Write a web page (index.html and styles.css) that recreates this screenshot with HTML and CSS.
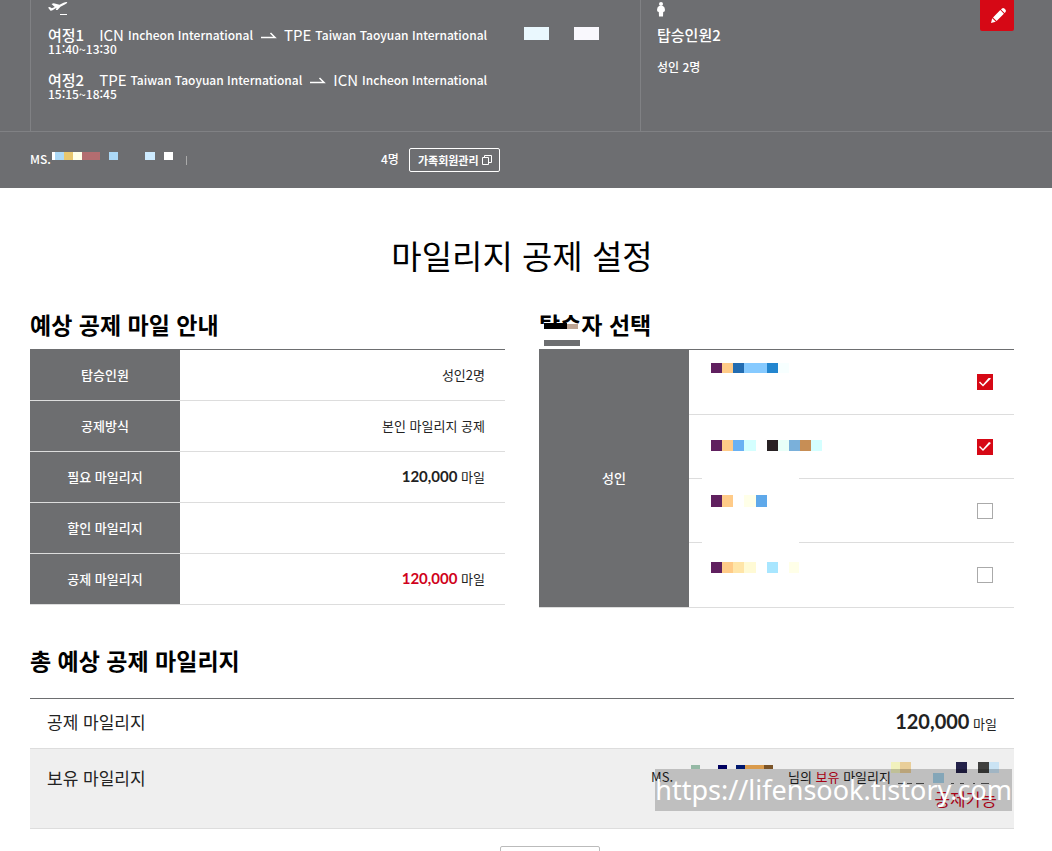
FILE: index.html
```html
<!DOCTYPE html>
<html lang="ko">
<head>
<meta charset="utf-8">
<title>마일리지 공제 설정</title>
<link rel="stylesheet" href="styles.css">
</head>
<body>
<header class="trip">
  <div class="trip-grid">
    <section class="journeys">
      <svg class="trip-icon" width="24" height="16" viewBox="0 0 24 16"><path d="M0 7.500l1.800-.4 2 1.200 3-1.200L3.500 4l2.200-.8 5.800 1.500 4-1.900q3-1.200 3.800-.5.200 1-2.500 2.300L12.500 6.700 9.500 10H7.800l.8-2.200-4.100 2.400q-1.500.8-2.200.2z" fill="#fff"/><path d="M12 14.500h7" stroke="#fff"/></svg>
      <ul class="journey-list">
        <li>
          <div class="route"><strong class="leg">여정1</strong><span class="code">ICN</span><span class="airport">Incheon International</span><svg class="arrow" width="15" height="8" viewBox="0 0 15 8"><path d="M0 6.500h14L9.500 2" fill="none" stroke="#fff" stroke-width="1.500"/></svg><span class="code">TPE</span><span class="airport">Taiwan Taoyuan International</span><svg class="flight" width="75" height="13" viewBox="0 0 75 13"><path fill="#eaf8fe" d="M0 0h25v13H0z"/><path fill="#f9f8fd" d="M50 0h25v13H50z"/></svg></div>
          <div class="time">11:40~13:30</div>
        </li>
        <li>
          <div class="route"><strong class="leg">여정2</strong><span class="code">TPE</span><span class="airport">Taiwan Taoyuan International</span><svg class="arrow" width="15" height="8" viewBox="0 0 15 8"><path d="M0 6.500h14L9.500 2" fill="none" stroke="#fff" stroke-width="1.500"/></svg><span class="code">ICN</span><span class="airport">Incheon International</span></div>
          <div class="time">15:15~18:45</div>
        </li>
      </ul>
    </section>
    <section class="party">
      <div>
        <svg class="trip-icon" width="8" height="18" viewBox="0 0 8 18"><circle cx="4" cy="4" r="2" fill="#fff"/><path d="M2 6h4q2 1 2 4 0 2-1.800 2L6 16.500H2L1.800 12Q0 12 0 10q0-3 2-4z" fill="#fff"/></svg>
        <h2 class="party-title">탑승인원2</h2>
        <p class="party-count">성인 2명</p>
      </div>
      <button class="edit" type="button"><svg width="16" height="16" viewBox="0 0 16 16"><path d="M0 16l1.200-4.800 3.600 3.600z" fill="#fff"/><path d="M2 10.400l7.300-7.300 3.600 3.600L5.600 14zM10 2.400l1-1q1.200-1 2.400.2l1 1q1 1.200.2 2.400l-1 1z" fill="#fff"/></svg></button>
    </section>
  </div>
  <div class="member">
    <span class="salutation">MS.</span>
    <svg class="member-name" width="122" height="8" viewBox="0 0 122 8"><path fill="#fff" d="M0 0h3v8H0zM112 0h9v8h-9z"/><path fill="#acd9f7" d="M3 0h9v8H3zM57 0h9v8h-9z"/><path fill="#e8c76e" d="M12 0h9v8h-9z"/><path fill="#ffffe8" d="M21 0h9v8h-9z"/><path fill="#b36d70" d="M30 0h18v8H30z"/><path fill="#cdebff" d="M93 0h10v8H93z"/></svg>
    <span class="bar"></span>
    <span class="family-count">4명</span>
    <button class="family" type="button">가족회원관리<svg width="10" height="10" viewBox="0 0 10 10"><path d="M.5 2.500h6v7h-6zM2.500 2.500v-2h7v7h-3" fill="none" stroke="#fff"/></svg></button>
  </div>
</header>

<main class="content">
  <h1 class="page-title">마일리지 공제 설정</h1>
  <div class="columns">
    <section>
      <h2 class="heading">예상 공제 마일 안내</h2>
      <table class="grid summary">
        <tr><th scope="row">탑승인원</th><td>성인2명</td></tr>
        <tr><th scope="row">공제방식</th><td>본인 마일리지 공제</td></tr>
        <tr><th scope="row">필요 마일리지</th><td><b class="num">120,000</b> 마일</td></tr>
        <tr><th scope="row">할인 마일리지</th><td></td></tr>
        <tr><th scope="row">공제 마일리지</th><td><b class="num red">120,000</b> 마일</td></tr>
      </table>
    </section>
    <section>
      <h2 class="heading">탑승자 선택<svg class="heading-mask" width="42" height="42" viewBox="0 0 42 42"><path fill="#fff" d="M0 20h42v16H0z"/><path d="M5 19h23v6H5z"/><path fill="#bda493" d="M28 20h11v5H28z"/><path fill="#6d6e70" d="M5 36h36v6H5z"/></svg></h2>
      <table class="grid people">
        <tr>
          <th scope="row" rowspan="4" id="adult">성인</th>
          <td><div class="person"><svg width="130" height="64" viewBox="0 0 130 64"><path fill="#60205f" d="M9 13h11v10H9z"/><path fill="#ffcb88" d="M20 13h11v10H20z"/><path fill="#226cb1" d="M31 13h11v10H31z"/><path fill="#86caff" d="M42 13h23v10H42z"/><path fill="#2386cf" d="M65 13h11v10H65z"/><path fill="#f7ffff" d="M76 13h11v10H76z"/></svg><input class="check" type="checkbox" aria-labelledby="adult" checked></div></td>
        </tr>
        <tr>
          <td><div class="person"><svg width="130" height="63" viewBox="0 0 130 63"><path fill="#60205f" d="M9 25h11v11H9z"/><path fill="#ffcb88" d="M20 25h11v11H20z"/><path fill="#69b1f3" d="M31 25h11v11H31z"/><path fill="#d4ffff" d="M42 25h12v11H42zM109 25h11v11h-11z"/><path fill="#282123" d="M65 25h11v11H65z"/><path fill="#e8fff8" d="M76 25h11v11H76z"/><path fill="#7ab0da" d="M87 25h11v11H87z"/><path fill="#c78e55" d="M98 25h11v11H98z"/></svg><input class="check" type="checkbox" aria-labelledby="adult" checked></div></td>
        </tr>
        <tr>
          <td><div class="person"><svg width="130" height="63" viewBox="0 0 130 63"><path fill="#fff" d="M0-1h97v65H0z"/><path fill="#60205f" d="M9 16h11v12H9z"/><path fill="#ffcb88" d="M20 16h11v12H20z"/><path fill="#ffffe8" d="M42 16h12v12H42z"/><path fill="#5fa9ea" d="M54 16h11v12H54z"/></svg><input class="check" type="checkbox" aria-labelledby="adult"></div></td>
        </tr>
        <tr>
          <td><div class="person"><svg width="130" height="64" viewBox="0 0 130 64"><path fill="#60205f" d="M9 19h11v11H9z"/><path fill="#ffcb88" d="M20 19h11v11H20z"/><path fill="#ffe5a8" d="M31 19h11v11H31z"/><path fill="#fffad5" d="M42 19h12v11H42z"/><path fill="#a8e6ff" d="M65 19h11v11H65z"/><path fill="#ffffe8" d="M87 19h10v11H87z"/></svg><input class="check" type="checkbox" aria-labelledby="adult"></div></td>
        </tr>
      </table>
    </section>
  </div>

  <section class="total">
    <h2 class="heading">총 예상 공제 마일리지</h2>
    <dl class="total-list">
      <div class="total-row">
        <dt>공제 마일리지</dt>
        <dd><b class="num big">120,000</b> 마일</dd>
      </div>
      <div class="total-row owned">
        <dt>보유 마일리지</dt>
        <dd>
          <div class="owner">MS.<svg width="115" height="24" viewBox="0 0 115 24"><path fill="#95b9a5" d="M18 0h9v4h-9z"/><path fill="#00005f" d="M45 0h9v4h-9z"/><path fill="#00186f" d="M63 0h9v4h-9z"/><path fill="#da9b4c" d="M72 0h19v4H72z"/><path fill="#7b5428" d="M91 0h9v4h-9z"/></svg>님의 <span class="red">보유</span> 마일리지<svg width="106" height="24" viewBox="0 0 106 24"><path fill="#f1f1bd" d="M0-3h9V8H0z"/><path fill="#e9ce99" d="M9-3h11V8H9z"/><path fill="#a6d0e7" d="M42 8h11v10H42z"/><path fill="#232149" d="M65-3h11V8H65z"/><path fill="#40403f" d="M87-3h11V8H87z"/><path fill="#cae3f4" d="M98-3h10V8H98z"/><path d="M7 18.500h6m3 0h5m4 0h8m27 0h3m6 0h4m9 0h2m6 0h8" stroke="#555" fill="none"/></svg></div>
          <div class="red possible">공제가능</div>
        </dd>
      </div>
    </dl>
    <div class="watermark">https://lifensook.tistory.com</div>
  </section>
  <div class="actions"><button class="next" type="button"></button></div>
</main>
</body>
</html>
```

FILE: styles.css
```css
* { box-sizing: border-box; }

body {
  margin: 0;
  height: 100vh;
  overflow: hidden;
  background: #fff;
  color: #222;
  font-family: "Noto Sans CJK KR", sans-serif;
  font-size: 13px;
}

h1, h2, p, ul, dl, dd { margin: 0; padding: 0; }
ul { list-style: none; }
svg { display: block; flex: none; overflow: visible; }
button { font-family: inherit; cursor: pointer; }

/* Trip header */
.trip { background: #6d6e71; color: #fff; }
.trip-grid {
  display: grid;
  grid-template-columns: 610fr 412fr;
  padding-left: 30px;
  border-bottom: 1px solid #808184;
}
.journeys, .party { border-left: 1px solid #808184; }
.journeys { padding: 0 17px 31px; }
.trip-icon { margin-bottom: 11px; }
.journey-list { display: grid; gap: 17px; }
.route { display: flex; align-items: center; height: 16px; line-height: 16px; white-space: nowrap; }
.leg { margin-right: 15px; font-size: 15px; font-weight: 500; }
.code { margin-right: 4px; font-size: 15px; }
.airport { font-size: 12px; font-weight: 500; }
.arrow { margin: 0 8px; }
.flight { margin: 0 0 4px 37px; }
.time { font-size: 12px; font-weight: 500; line-height: 12px; }

.party { display: flex; justify-content: space-between; padding: 0 38px 0 16px; }
.party .trip-icon { margin-bottom: 7px; }
.party-title { font-size: 15px; font-weight: 500; line-height: 20px; }
.party-count { margin-top: 12px; font-size: 12px; font-weight: 500; line-height: 20px; }
.edit {
  display: flex;
  align-items: flex-end;
  justify-content: center;
  width: 34px;
  height: 31px;
  padding: 0 0 8px 3px;
  border: 0;
  border-radius: 0 0 2px 2px;
  background: #d60815;
}

.member {
  display: flex;
  align-items: center;
  height: 56px;
  padding: 0 38px 0 30px;
  font-size: 12px;
  font-weight: 500;
  line-height: 16px;
}
.salutation { width: 22px; padding-bottom: 2px; }
.member-name { margin: 0 12px 8px 0; }
.bar { width: 1px; height: 9px; background: #aaa; }
.family-count { margin-left: 194px; padding-bottom: 2px; }
.family {
  display: flex;
  align-items: center;
  gap: 3px;
  height: 24px;
  margin-left: 10px;
  padding: 0 7px 0 8px;
  border: 1px solid #fff;
  border-radius: 2px;
  background: transparent;
  color: #fff;
  font-size: 11px;
  font-weight: 700;
}

/* Content */
.content { padding: 42px 38px 0 30px; }
.page-title {
  margin-bottom: 24px;
  color: #000;
  font-size: 33px;
  font-weight: 400;
  line-height: 50px;
  text-align: center;
}
.columns { display: grid; grid-template-columns: 1fr 1fr; gap: 34px; }
.heading {
  position: relative;
  margin-bottom: 5px;
  color: #000;
  font-size: 23px;
  font-weight: 700;
  line-height: 40px;
}
.heading-mask { position: absolute; left: 0; top: 0; }

.grid {
  width: 100%;
  border-spacing: 0;
  border-top: 1px solid #6d6e70;
}
.grid th {
  width: 150px;
  padding: 0 0 2px;
  border-bottom: 1px solid #ddd;
  background: #6d6e70;
  color: #fff;
  font-weight: 500;
}
.grid td { padding: 0 20px 2px; border-bottom: 1px solid #ddd; }
.summary th, .summary td { height: 51px; }
.summary td { text-align: right; }
.people td { padding: 0 21px 0 13px; }
.person { display: flex; align-items: center; justify-content: space-between; }

.check {
  display: grid;
  place-items: center;
  width: 16px;
  height: 16px;
  margin: 0;
  appearance: none;
  border: 1px solid #aaa;
  background: #fff;
}
.check:checked { border-color: #d60815; background: #d60815; }
.check:checked::before {
  content: "";
  width: 12px;
  height: 9px;
  background: #fff;
  clip-path: polygon(0 5px, 1px 4px, 4px 7px, 10px 0, 12px 1px, 4px 9px);
}

.num { font-family: Lato, sans-serif; font-size: 15px; font-weight: 700; }
.big { font-size: 20px; }
.red { color: #d0021b; }

/* Totals */
.total { position: relative; margin-top: 32px; }
.total .heading { margin-bottom: 18px; }
.total-list { border-top: 1px solid #6d6e70; }
.total-row {
  display: flex;
  justify-content: space-between;
  padding: 10px 17px;
  border-bottom: 1px solid #ddd;
  line-height: 24px;
}
.total-row dt { padding: 1px 0 4px; font-size: 17px; font-weight: 400; }
.owned { padding: 16px 17px 19px; background: #efefef; }
.owned dd { text-align: right; }
.owner { display: flex; justify-content: flex-end; white-space: pre; }
.possible { font-size: 17px; line-height: 20px; }
.watermark {
  position: absolute;
  right: 2px;
  bottom: 18px;
  background: rgba(0, 0, 0, .2);
  color: #fff;
  font-family: "Noto Sans", sans-serif;
  font-size: 27px;
  line-height: 42px;
}
.actions { display: flex; justify-content: center; padding: 17px 0 0 56px; }
.next {
  width: 100px;
  height: 40px;
  border: 1px solid #bbb;
  border-radius: 2px;
  background: #fff;
}
```
